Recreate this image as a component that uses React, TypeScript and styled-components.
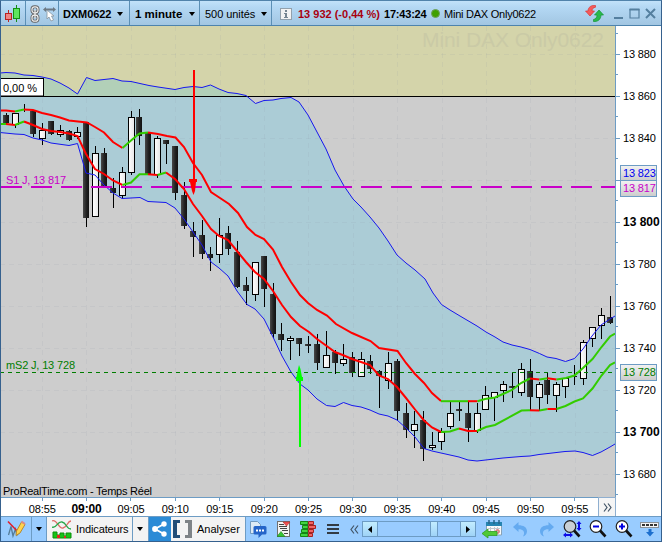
import React from "react";
import styled, { createGlobalStyle, css } from "styled-components";

const Global = createGlobalStyle`
  * { box-sizing: border-box; }
  body { margin: 0; background: #fff; }
`;

const Window = styled.div`
  width: 662px;
  height: 542px;
  display: flex;
  flex-direction: column;
  overflow: hidden;
  background: #fff;
  border: 1px solid #36618e;
  border-top-color: #5183ab;
  font: 11px/14px "Liberation Sans", Arial, sans-serif;
  color: #000;
  white-space: nowrap;
`;

const Header = styled.header`
  height: 25px;
  flex: none;
  display: flex;
  background: linear-gradient(#c2e2fa, #b4d8f4 25%, #a2c6e2);
  border-bottom: 1px solid #4d83ad;
`;

const HeaderCell = styled.div<{ $w: number; $pad?: number; $bold?: boolean; $gap?: number }>`
  width: ${(p) => p.$w}px;
  padding-left: ${(p) => p.$pad ?? 0}px;
  gap: ${(p) => p.$gap ?? 0}px;
  flex: none;
  display: flex;
  align-items: center;
  padding-top: 1px;
  border-right: 1px solid #5b8fb5;
  font-weight: ${(p) => (p.$bold ? 700 : 400)};
`;

const Quote = styled.div`
  flex: 1;
  display: flex;
  align-items: center;
  padding: 1px 5px 0 8px;
`;

const Label = styled.span<{ $w?: number; $size?: number; $track?: number; $color?: string; $bold?: boolean; $indent?: number }>`
  flex: none;
  ${(p) => p.$w && css`width: ${p.$w}px;`}
  margin-left: ${(p) => p.$indent ?? 0}px;
  font-size: ${(p) => p.$size ?? 11}px;
  letter-spacing: ${(p) => p.$track ?? 0}px;
  color: ${(p) => p.$color ?? "#000"};
  ${(p) => p.$bold && css`font-weight: 700;`}
`;

const Caret = styled.i`
  flex: none;
  border: 3.5px solid transparent;
  border-top: 4px solid #000;
  border-bottom: 0;
`;

const StatusDot = styled.i`
  width: 9px;
  height: 9px;
  margin-right: 4px;
  flex: none;
  border-radius: 50%;
  background: #3fa000;
  border: 1px solid #6f9f5c;
`;

const WindowTools = styled.div`
  margin-left: auto;
  display: flex;
  align-items: center;
  gap: 10px;
`;

const Body = styled.main`
  flex: none;
  height: 471px;
  display: flex;
`;

const PriceAxis = styled.div`
  position: relative;
  width: 46px;
  border-left: 1px solid #6d9cc4;
  padding-top: 7px;
  display: flex;
  flex-direction: column;
  overflow: hidden;
  background: linear-gradient(#6d9cc4, #6d9cc4) 0 7px / 2px 1px no-repeat;
`;

const PriceRow = styled.div<{ $major?: boolean }>`
  height: 42px;
  flex: none;
  display: flex;
  align-items: center;
  gap: 3px;
  font-size: ${(p) => (p.$major ? 12 : 11)}px;
  font-weight: ${(p) => (p.$major ? 700 : 400)};
  letter-spacing: ${(p) => (p.$major ? 0 : -0.15)}px;
  background: linear-gradient(#6d9cc4, #6d9cc4) 0 100% / 2px 1px no-repeat;
  &::before {
    content: "";
    width: 4px;
    height: 1px;
    background: #6d9cc4;
  }
`;

const PriceTag = styled.div<{ $y: number; $color: string; $h: number }>`
  position: absolute;
  left: 4px;
  top: ${(p) => p.$y}px;
  width: 37px;
  height: ${(p) => p.$h}px;
  padding-left: 2px;
  line-height: ${(p) => p.$h - 2}px;
  border: 1px solid #6d9cc4;
  background: linear-gradient(#f1f1f1, #cdcdcd);
  color: ${(p) => p.$color};
  letter-spacing: -0.15px;
`;

const TimeAxis = styled.div`
  height: 19px;
  flex: none;
  display: flex;
`;

const TimeScale = styled.div`
  width: 597px;
  padding-left: 19px;
  display: grid;
  grid-template-columns: repeat(13, 44.4px);
  border-top: 1px solid #6d9cc4;
`;

const TimeTick = styled.div<{ $major?: boolean }>`
  display: flex;
  justify-content: center;
  padding-top: 4px;
  letter-spacing: -0.1px;
  font-size: ${(p) => (p.$major ? 12 : 11)}px;
  font-weight: ${(p) => (p.$major ? 700 : 400)};
  background: linear-gradient(#6d9cc4, #6d9cc4) 50% 0 / 1px 3px no-repeat;
`;

const MoreButton = styled.div`
  width: 18px;
  display: flex;
  align-items: center;
  justify-content: center;
  background: #f5f5f5;
  border: 1px solid #8fafd0;
  border-bottom: 0;
`;

const Toolbar = styled.footer`
  height: 25px;
  flex: none;
  display: flex;
  background: #9cf;
  border-top: 1px solid #6d9cc4;
`;

const ToolCell = styled.div<{ $w: number; $bg?: string; $line?: boolean; $pad?: number }>`
  width: ${(p) => p.$w}px;
  flex: none;
  display: flex;
  align-items: center;
  padding-left: ${(p) => p.$pad ?? 0}px;
  background: ${(p) => p.$bg ?? "transparent"};
  border-right: ${(p) => (p.$line ? "1px solid #6d9cc4" : "0")};
`;

const Scrollbar = styled.div`
  width: 114px;
  height: 16px;
  margin-top: 4px;
  flex: none;
  display: flex;
  border: 1px solid #6d9cc4;
`;

const ScrollButton = styled.div`
  width: 14px;
  display: flex;
  align-items: center;
  justify-content: center;
  background: linear-gradient(#c3edff, #9fd3f7);
`;

const ScrollTrack = styled.div`
  flex: 1;
  padding-left: 52px;
  border: solid #6d9cc4;
  border-width: 0 1px;
`;

const ScrollThumb = styled.div`
  width: 8px;
  height: 100%;
  background: linear-gradient(#c3edff, #9fd3f7);
  border: solid #6d9cc4;
  border-width: 0 1px;
`;

type Pt = [number, number];
const pts = (s: string): Pt[] => s.trim().split(/\s+/).map((p) => p.split(",").map(Number) as Pt);
const join = (p: Pt[]) => p.map((q) => q.join(",")).join(" ");

const bandTop = pts(`0,73 6,72.5 15,73 24,75 33,75.5 42,77 51,79 60,83 69,88 77.5,94 86.5,77.5 95,80.5 104,79.5 113,78.5 122,81 131,81.5
 140,83.5 149,85.5 158,87 175,89.5 184,87.5 193,86.5 202,87.5 210.5,85 219,89 228,92.5 237,93.5 246,95.5 255.5,103.5 264,100.5 273,100
 281,98.5 291,97.5 299,102 308,115 317,132 326,149 335,170 344,186 353,199 361,207 370,217 379,228 388,241 397,255 406,263 415,270 425,279
 433,293 441.5,304.5 450,310 460,316 477,326 486,332 495,337 503,342 512,345 521,347 530,349.5 539.5,353.5 547,357 556,358.5 565.5,361.5
 574.5,358.5 583,349 592,336 601,325 610,319 615,316`);
const bandBottom = pts(`0,132.5 15,134 24,134.5 33,138 42,140 51,143 69,145.5 77.5,143.5 86,173 95,175 104,185 113,193 122,198.5 131,198 140,197.5
 148,201.5 166,202.5 175,208 184,219 193,232 202,245 211,262 219,268 228,276 237,291 247,304.5 255,309 264,319 273,337 282,356 291,372
 300,384 308,390 317,399 326.5,405.5 335,406.5 343.5,402.5 352,405.5 361,407 370,410 379,414 388,416 397,420 406,428 415,437 424,448.5
 432,451 441,453 450,455 459,457 468,460 477,461 503,458 521,456.5 530,456 539,454.5 548,453.5 565,451.5 575,451 583,452.5 592.5,455.5
 601,452 610,447 615,444`);

const RED = "#ff0000";
const GREEN = "#33cc00";
const trend: [string, string][] = [
  [RED, "0,110.5 6,110.5 15,111.5"],
  [GREEN, "15,111.5 24,109.5"],
  [RED, "24,109.5 33,110 42,113 51,115 60,117.5 69,120.5 78,121.5 87,122.5 95,127 104,132.5 113,142 122.5,148"],
  [GREEN, "122.5,148 131,140.5 139.5,133.5 148,132.5"],
  [RED, "148,132.5 158,134 167,136 175.5,137.5 184,147 193,163 202,175 211,192 220,198 229,204 238,213 247,227 255.5,235 264,239 273,249.5 282,267 291,282 300,295 308,303 317,310 327,315.5 336,324 352,333 370.5,341 379,348 397.5,351 406,363 415,374 424,383 432,393 441,401"],
  [GREEN, "441,401.2 468,401.2"],
  [RED, "468,401.2 477.5,401.2"],
  [GREEN, "477.5,401.2 485,399 495,397.5 503,394 512,390 521,383 530,378.5"],
  [RED, "530,378.5 539.5,379.5"],
  [GREEN, "539.5,379.5 547.5,378.3"],
  [RED, "547.5,378.3 556.5,379.5"],
  [GREEN, "556.5,379.5 566,378 574.5,375.5 583,368 592.5,359 601.5,347 610,336.5 615,333.5"],
  [GREEN, "0,124 6,124"],
  [RED, "6,124 15,125"],
  [GREEN, "15,125 24,121.5"],
  [RED, "24,121.5 33,125 42,129 51,131 60,132 69,133.5 77.5,136 86,154 95,169 104,174 113,180.5 122.5,185"],
  [GREEN, "122.5,185 131,182.5 139.5,174.3 148,174.3"],
  [RED, "148,174.3 157.5,175"],
  [GREEN, "157.5,175 166,172.5"],
  [RED, "166,172.5 175,179 184,189 193,204 202,216 211,229 219,236 228,240 237,251 246,262 255,272 264,279 273,291 282,305 291,317 300,326 309,332 317,339 326,345.5 335,352 344,355.5 352,359 361,362 370,365 379,375.5 388,379 397,387 406,398 415,409.5 424,420.5 432,427.5 441,432"],
  [GREEN, "441,432 450,431.5 459,428.5"],
  [RED, "459,428.5 468,431 477,431"],
  [GREEN, "477,431 486,427 495,425 521.5,410.5 530,410.2"],
  [RED, "530,410.2 539.5,410.5"],
  [GREEN, "539.5,410.5 547.5,409"],
  [RED, "547.5,409 556.5,409"],
  [GREEN, "556.5,409 565.5,406 574.5,401.5 583,398.5 592.5,388.5 601.5,375.5 610,365 615,362.5"],
];

// x, high, body top, body bottom, low, rising (1) or falling (0)
type Candle = [number, number, number, number, number, number];
const candles: Candle[] = [
  [6, 113, 115, 123, 124, 0], [15, 113, 113, 125, 128, 1], [24, 104, 109, 110, 112, 0], [33, 111, 111, 134, 137, 0],
  [42, 123, 130, 139, 145, 1], [51, 121, 121, 134, 135, 0], [60, 125, 130, 135, 137, 1], [69, 130, 131, 140, 141, 0],
  [77, 127, 132, 137, 139, 1], [86, 122, 122, 218, 227, 0], [95, 146, 153, 217, 217, 1], [104, 148, 153, 186, 186, 0],
  [113, 178, 188, 193, 208, 0], [122, 167, 172, 196, 199, 1], [131, 111, 117, 173, 175, 1], [139, 109, 117, 136, 145, 0],
  [148, 133, 133, 174, 174, 0], [157, 136, 138, 175, 178, 1], [166, 140, 140, 144, 164, 0], [175, 146, 146, 193, 200, 0],
  [184, 182, 195, 226, 229, 0], [193, 222, 231, 237, 257, 0], [202, 220, 235, 254, 259, 0], [210, 247, 254, 258, 271, 0],
  [219, 218, 235, 255, 263, 1], [228, 226, 233, 249, 255, 0], [237, 241, 252, 287, 288, 0], [246, 277, 285, 291, 305, 0],
  [255, 262, 262, 295, 301, 1], [264, 256, 256, 289, 307, 0], [273, 283, 294, 334, 338, 0], [281, 323, 334, 340, 351, 0],
  [290, 336, 338, 341, 360, 1], [299, 338, 338, 344, 356, 0], [308, 336, 344, 346, 353, 0], [317, 334, 344, 363, 370, 0],
  [326, 331, 355, 368, 368, 1], [335, 350, 352, 363, 374, 0], [343, 344, 359, 364, 366, 1], [352, 352, 357, 373, 377, 0],
  [361, 352, 359, 377, 377, 1], [370, 355, 361, 369, 374, 0], [379, 370, 371, 376, 408, 0], [388, 352, 363, 381, 389, 1],
  [397, 359, 361, 411, 421, 0], [406, 403, 413, 430, 438, 0], [414, 411, 424, 431, 448, 1], [423, 411, 420, 449, 461, 0],
  [432, 432, 445, 448, 450, 1], [441, 428, 432, 442, 450, 1], [450, 402, 413, 427, 429, 1], [459, 402, 409, 411, 421, 0],
  [468, 401, 413, 428, 442, 0], [477, 403, 413, 431, 433, 1], [485, 386, 395, 410, 410, 1], [494, 392, 392, 398, 421, 1],
  [503, 381, 384, 391, 402, 1], [512, 373, 386, 388, 398, 0], [521, 363, 369, 393, 396, 1], [530, 359, 371, 397, 410, 0],
  [539, 382, 384, 398, 411, 1], [547, 373, 380, 395, 404, 0], [556, 382, 384, 396, 412, 1], [565, 378, 378, 387, 398, 1],
  [574, 365, 376, 377, 385, 0], [583, 340, 342, 379, 385, 1], [592, 327, 327, 339, 347, 1], [601, 308, 315, 326, 339, 1],
  [610, 296, 317, 323, 324, 0],
];

const Plot = () => {
  const area = join([...bandTop, ...[...bandBottom].reverse()]);
  const gx = Array.from({ length: 13 }, (_, i) => Math.round(42 + i * 44.4) + 0.5);
  const gy = Array.from({ length: 11 }, (_, i) => 54.5 + i * 42);
  return (
    <svg width="614" height="471" viewBox="1 26 614 471" fontFamily="Liberation Sans, Arial, sans-serif">
      <defs>
        <linearGradient id="dark">
          <stop offset="0" stopColor="#484848" />
          <stop offset=".55" stopColor="#222" />
          <stop offset="1" stopColor="#111" />
        </linearGradient>
        <linearGradient id="light">
          <stop offset="0" stopColor="#fff" />
          <stop offset="1" stopColor="#e6e6e6" />
        </linearGradient>
        <clipPath id="upper"><rect x="0" y="26" width="615" height="70" /></clipPath>
      </defs>
      <rect x="0" y="26" width="615" height="471" fill="#cdcdcd" />
      <rect x="0" y="26" width="615" height="70" fill="#d4d4aa" />
      <polygon points={area} fill="#abccd6" />
      <polygon points={area} fill="#b2d0b8" clipPath="url(#upper)" />
      <g stroke="#8794a2" strokeOpacity=".11" strokeDasharray="5 4" shapeRendering="crispEdges">
        {gx.map((x) => <line key={x} x1={x} x2={x} y1="26" y2="497" />)}
        {gy.map((y) => <line key={y} x1="0" x2="615" y1={y} y2={y} />)}
      </g>
      <text x="422" y="47" fontSize="21" fill="#cacaa6" textLength="182">Mini DAX Only0622</text>
      <rect x="0" y="96" width="615" height="1" fill="#000" />
      <g shapeRendering="crispEdges">
        {candles.map(([x, h, t, b, l, up]) => (
          <g key={x}>
            <rect x={x} y={h} width="1" height={l - h} fill="#000" />
            {up ? (
              <rect x={x - 2.5} y={t + 0.5} width="6" height={Math.max(1, b - t - 1)} fill="url(#light)" stroke="#000" />
            ) : (
              <rect x={x - 3} y={t} width="6" height={b - t} fill="url(#dark)" />
            )}
          </g>
        ))}
      </g>
      <g fill="none" stroke="#1717ee" strokeWidth="1">
        <polyline points={join(bandTop)} />
        <polyline points={join(bandBottom)} />
      </g>
      <path d="M1 187H615" stroke="#c800c8" strokeWidth="2" strokeDasharray="21 9" />
      <path d="M0 372.5H615" stroke="#007d00" strokeDasharray="4 4" shapeRendering="crispEdges" />
      <g fill="none" strokeWidth="2">
        {trend.map(([c, p]) => <polyline key={p} points={p} stroke={c} />)}
      </g>
      <path d="M193 70h2v109h2v3h-1l-1 9-1.500 4-1.500-4-2-9h-1v-3h4z" fill="#f00" />
      <path d="M299 447h2v-66h2v-4h-1l-1.500-8-1.500-4-1 4-1.500 8H296v4h3z" fill="#0f0" />
      <rect x="0.500" y="78.500" width="43" height="17.500" fill="#fff" stroke="#000" />
      <text x="3" y="92" fontSize="11" textLength="34">0,00 %</text>
      <text x="6" y="184" fontSize="11" fill="#c800c8" textLength="60">S1 J, 13 817</text>
      <text x="6" y="369" fontSize="11" fill="#007d00" textLength="69">mS2 J, 13 728</text>
      <text x="3" y="495" fontSize="11" textLength="149">ProRealTime.com - Temps Réel</text>
    </svg>
  );
};

const CandlesIcon = () => (
  <svg width="17" height="18" viewBox="0 0 17 18">
    <path d="M3.500 5v12" stroke="#b22" /><rect x=".5" y="8.500" width="6" height="6" fill="#ee8585" stroke="#b22" />
    <path d="M11.500 0v17" stroke="#149014" /><rect x="8.500" y="3.500" width="6" height="10" fill="#5ee65e" stroke="#149014" />
  </svg>
);
const LinkIcon = () => (
  <svg width="10" height="18" viewBox="0 0 10 18" fill="none">
    <g stroke="#666" strokeWidth="3"><rect x="2" y="1.800" width="6" height="6" rx="2.500" /><rect x="2" y="10.200" width="6" height="6" rx="2.500" /><path d="M5 5.500v7" /></g>
    <g stroke="#eee" strokeWidth="1.200"><rect x="2" y="1.800" width="6" height="6" rx="2.500" /><rect x="2" y="10.200" width="6" height="6" rx="2.500" /><path d="M5 5v8" /></g>
  </svg>
);
const CursorIcon = () => (
  <svg width="14" height="16" viewBox="0 0 14 16">
    <path d="M0 3.500 3 1v1.500h7V1l3 2.500L10 6V4.500H3V6z" fill="#6d7983" />
    <path d="M4 4v9l2-2 2 4 2.500-1-2-4H11z" fill="#fff" stroke="#89949d" strokeWidth=".8" />
  </svg>
);
const InfoIcon = () => (
  <svg width="12" height="12" viewBox="0 0 12 12">
    <rect x=".5" y=".5" width="11" height="11" fill="#f3f3f3" stroke="#92a1ad" />
    <path d="M5 2h2v2H5zM4 5h3v4h1v1H4V9h1V6H4z" fill="#778692" />
  </svg>
);
const RefreshIcon = () => (
  <svg width="19" height="17" viewBox="0 0 19 17">
    <path d="M10.500.5C6-.2 3 2.500 3 6H.5l4.500 5 4.500-5H7c0-2 1.200-3.500 3.500-3.800z" fill="#f45b5b" stroke="#d33" strokeWidth=".7" />
    <path d="M8.500 16.500c4.500.5 7.500-2.500 7.500-6.500h2.500L14 5l-4.500 5H12c0 2.500-1.200 4-3.500 4.500z" fill="#29b94c" stroke="#159335" strokeWidth=".7" />
  </svg>
);
const WindowButtons = () => (
  <svg width="42" height="12" viewBox="0 0 42 12" fill="none" stroke="#547f9f">
    <path d="M0 10h9" strokeWidth="2" /><path d="M16 1.500h9v8.500h-9z" strokeWidth="1.200" /><path d="M15.500 1.500h10" strokeWidth="2" /><path d="m32 1 9 9m0-9-9 9" strokeWidth="2" />
  </svg>
);
const PencilChartIcon = () => (
  <svg width="20" height="18" viewBox="0 0 20 18" fill="none">
    <path d="M1.500 15 4 6.500 6 16l2.500-7 1.500 6 3-4" stroke="#557d9a" strokeWidth="1.300" />
    <path d="M1 1.500l10 10.500" stroke="#e11d2a" strokeWidth="1.500" />
    <path d="m9.500 11 5-9 3.500 2.500-5 8.500-4 2.500z" fill="#ffd34d" stroke="#b78a2c" /><path d="m14.500 1.500 3.500 2.500" stroke="#d88" strokeWidth="2" />
  </svg>
);
const IndicatorIcon = () => (
  <svg width="20" height="20" viewBox="0 0 20 20" fill="none">
    <path d="M0 2c5-3 6 8 11 7s4-7 8-7" stroke="#e06b68" strokeWidth="1.300" />
    <path d="M0 8c5 2 5-6 10-5s4 7 9 7" stroke="#25a84a" strokeWidth="1.300" />
    <path d="M1 19v-6h4v3h3v-2h4v3h2v-3h5v5z" fill="#16c416" stroke="#0a8f0a" /><path d="M5 16h3v3H5zm7 1h2v2h-2z" fill="#e42222" />
  </svg>
);
const ShareIcon = () => (
  <svg width="15" height="16" viewBox="0 0 15 16" fill="#fff">
    <path d="M12 3 3 8l9 5" fill="none" stroke="#fff" strokeWidth="1.800" /><circle cx="12" cy="3" r="2.700" /><circle cx="3" cy="8" r="2.900" /><circle cx="12" cy="13" r="2.700" />
  </svg>
);
const BracketIcon = () => (
  <svg width="19" height="18" viewBox="0 0 19 18">
    <path d="M0 0h7v3H4v12h3v3H0z" fill="#214d77" /><path d="M19 0h-7v3h3v12h-3v3h7z" fill="#7e8387" />
  </svg>
);
const ChatIcon = () => (
  <svg width="17" height="17" viewBox="0 0 17 17">
    <path d="M.5.5h7l3 3v9H.5z" fill="#dceaf5" stroke="#719ac0" />
    <path d="M5 5h10q1.500 0 1.500 1.500v5.500q0 1.500-1.500 1.500h-3L8.500 17v-3.500H5q-1.500 0-1.500-1.500V6.500Q3.500 5 5 5z" fill="#2464c8" />
    <path d="M6 8.500h2v2H6zm3 0h2v2H9zm3 0h2v2h-2z" fill="#fff" />
  </svg>
);
const NewsIcon = () => (
  <svg width="14" height="17" viewBox="0 0 14 17">
    <rect x=".5" y=".5" width="12" height="15" fill="#f3f3f3" stroke="#707070" />
    <path d="M2 3.500h5M2 5.500h8M3 7.500h7M5 9.500h6M7 12.500h4" stroke="#444" /><path d="M6 1h7L9.500 5z" fill="#f05252" stroke="#b52b2b" strokeWidth=".6" /><path d="m0 15.500 4-5 4 5z" fill="#35c435" stroke="#198119" strokeWidth=".6" />
  </svg>
);
const DepthIcon = () => (
  <svg width="17" height="17" viewBox="0 0 17 17">
    <path d="M.5.500H8v3H.5zM2.500 4.500H8v3H2.500zM1.500 8.500H8v3H1.500zM.5 12.500H8v3H.5z" fill="#41d441" stroke="#148714" />
    <path d="M8.500.500h5v3h-5zM8.500 4.500h7v3h-7zM8.500 8.500h5v3h-5zM8.500 12.500h4v3h-4z" fill="#ef6464" stroke="#a42222" />
  </svg>
);
const MenuIcon = () => (
  <svg width="12" height="12" viewBox="0 0 12 12"><path d="M0 2h12M0 6h12M0 10h12" stroke="#333b43" strokeWidth="2" /></svg>
);
const Chevrons = ({ right }: { right?: boolean }) => (
  <svg width="9" height="9" viewBox="0 0 9 9" fill="none" stroke="#425466" strokeWidth="1.200">
    <path d={right ? "m1 .5 3 4-3 4m4-8 3 4-3 4" : "m4 .5-3 4 3 4m4-8-3 4 3 4"} />
  </svg>
);
const Arrow = ({ right }: { right?: boolean }) => (
  <svg width="4" height="7" viewBox="0 0 4 7"><path d={right ? "M0 0v7l4-3.500z" : "M4 0v7L0 3.500z"} /></svg>
);
const CalendarIcon = () => (
  <svg width="20" height="19" viewBox="0 0 20 19">
    <path d="M4.500 4h15v11h-15z" fill="#f8fafa" stroke="#8aa2b5" /><path d="M4 2h16v4H4z" fill="#2684b0" />
    <path d="M7 0v4m5-4v4m5-4v4" stroke="#28668a" strokeWidth="1.500" />
    <path d="M6 8.500h12M6 11.500h12M8.500 7v8M12.500 7v8M15.500 7v8" stroke="#c3c9cf" /><path d="M14 10h3v3h-3z" fill="none" stroke="#df5454" />
    <path d="M0 13.500 6 9v2.500h9v4H6V18z" fill="#4fc936" stroke="#339e25" strokeWidth=".8" />
  </svg>
);
const TurnIcon = ({ redo }: { redo?: boolean }) => (
  <svg width="15" height="15" viewBox="0 0 15 15">
    <g transform={redo ? "translate(15 0) scale(-1 1)" : undefined}>
      <path d="M0 5 5.500 0v3.200c5 0 8.500 2 8.500 6 0 2.500-1.500 4.300-4 5.300 3-5-.5-7.500-4.500-7.300V10z" fill="#64aaf0" />
    </g>
  </svg>
);
const ZoomIcon = ({ kind }: { kind: "fit" | "out" | "in" }) => (
  <svg width="19" height="18" viewBox="0 0 19 18" fill="none">
    <circle cx="7" cy="6.500" r="5.800" fill={kind === "fit" ? "#c9d0d5" : "#fff"} stroke="#222" strokeWidth="1.200" />
    <path d="m11 10.500 5.500 6" stroke="#111" strokeWidth="2.600" />
    {kind !== "fit" && <path d="M4 6.500h6" stroke="#0000e0" strokeWidth="2" />}
    {kind === "in" && <path d="M7 3.500v6" stroke="#0000e0" strokeWidth="2" />}
    {kind === "fit" && (
      <g fill="#0c0ce8">
        <path d="m0 15 3-2.500V14h4v-1.500L10 15l-3 2.500V16H3v1.500z" /><path d="m16 1 2.500 3H17v4h1.500L16 11l-2.500-3H15V4h-1.500z" />
      </g>
    )}
  </svg>
);
const DockIcon = () => (
  <svg width="19" height="15" viewBox="0 0 19 15">
    <rect x=".5" y=".5" width="18" height="5" fill="#f4f4f4" stroke="#8a9299" /><path d="M2 2h3v2H2zm4 0h3v2H6zm4 0h3v2h-3zm4 0h3v2h-3z" fill="#333" />
    <path d="M8.500 7h3v3H14l-4 4.500L6 10h2.500z" fill="#1c6fce" />
  </svg>
);

const prices = [880, 860, 840, 0, 800, 780, 760, 740, 720, 700, 680];
const times = ["08:55", "09:00", "09:05", "09:10", "09:15", "09:20", "09:25", "09:30", "09:35", "09:40", "09:45", "09:50", "09:55"];

export default function App() {
  return (
    <>
      <Global />
      <Window>
        <Header>
          <HeaderCell $w={25} $pad={4}><CandlesIcon /></HeaderCell>
          <HeaderCell $w={33} $pad={4} $gap={3}><LinkIcon /><CursorIcon /></HeaderCell>
          <HeaderCell $w={71} $pad={4} $bold><Label $w={54} $track={-0.1}>DXM0622</Label><Caret /></HeaderCell>
          <HeaderCell $w={70} $pad={5} $bold><Label $w={54} $size={11.5}>1 minute</Label><Caret /></HeaderCell>
          <HeaderCell $w={72} $pad={5}><Label $w={56} $track={-0.05}>500 unités</Label><Caret /></HeaderCell>
          <Quote>
            <InfoIcon />
            <Label $w={86} $indent={6} $bold $color="#a80010">13 932 (-0,44 %)</Label>
            <Label $w={47} $bold $track={-0.2}>17:43:24</Label>
            <StatusDot />
            <Label $track={-0.24}>Mini DAX Only0622</Label>
            <WindowTools>
              <RefreshIcon />
              <WindowButtons />
            </WindowTools>
          </Quote>
        </Header>
        <Body>
          <Plot />
          <PriceAxis>
            {prices.map((p) => <PriceRow key={p} $major={p === 800 || p === 700}>{p ? `13 ${p}` : null}</PriceRow>)}
            <PriceTag $y={139} $h={16} $color="#0000f0">13 823</PriceTag>
            <PriceTag $y={154} $h={17} $color="#c800c8">13 817</PriceTag>
            <PriceTag $y={338} $h={17} $color="#007d00">13 728</PriceTag>
          </PriceAxis>
        </Body>
        <TimeAxis>
          <TimeScale>{times.map((t) => <TimeTick key={t} $major={t === "09:00"}>{t}</TimeTick>)}</TimeScale>
          <MoreButton><Chevrons right /></MoreButton>
        </TimeAxis>
        <Toolbar>
          <ToolCell $w={31} $pad={6} $line><PencilChartIcon /></ToolCell>
          <ToolCell $w={15} $pad={4} $line><Caret /></ToolCell>
          <ToolCell $w={86} $pad={5} $bg="#f3f3f3" $line><IndicatorIcon /><Label $indent={4} $track={-0.12}>Indicateurs</Label></ToolCell>
          <ToolCell $w={16} $pad={4} $bg="#f3f3f3" $line><Caret /></ToolCell>
          <ToolCell $w={22} $pad={3} $bg="#2b8bd6"><ShareIcon /></ToolCell>
          <ToolCell $w={75} $pad={2} $bg="#f3f3f3" $line><BracketIcon /><Label $indent={5}>Analyser</Label></ToolCell>
          <ToolCell $w={31} $pad={4}><ChatIcon /></ToolCell>
          <ToolCell $w={23}><NewsIcon /></ToolCell>
          <ToolCell $w={27}><DepthIcon /></ToolCell>
          <ToolCell $w={23}><MenuIcon /></ToolCell>
          <ToolCell $w={12}><Chevrons /></ToolCell>
          <Scrollbar>
            <ScrollButton><Arrow /></ScrollButton>
            <ScrollTrack><ScrollThumb /></ScrollTrack>
            <ScrollButton><Arrow right /></ScrollButton>
          </Scrollbar>
          <ToolCell $w={37} $pad={6}><CalendarIcon /></ToolCell>
          <ToolCell $w={26}><TurnIcon /></ToolCell>
          <ToolCell $w={24}><TurnIcon redo /></ToolCell>
          <ToolCell $w={26}><ZoomIcon kind="fit" /></ToolCell>
          <ToolCell $w={26}><ZoomIcon kind="out" /></ToolCell>
          <ToolCell $w={25}><ZoomIcon kind="in" /></ToolCell>
          <ToolCell $w={20}><DockIcon /></ToolCell>
        </Toolbar>
      </Window>
    </>
  );
}
